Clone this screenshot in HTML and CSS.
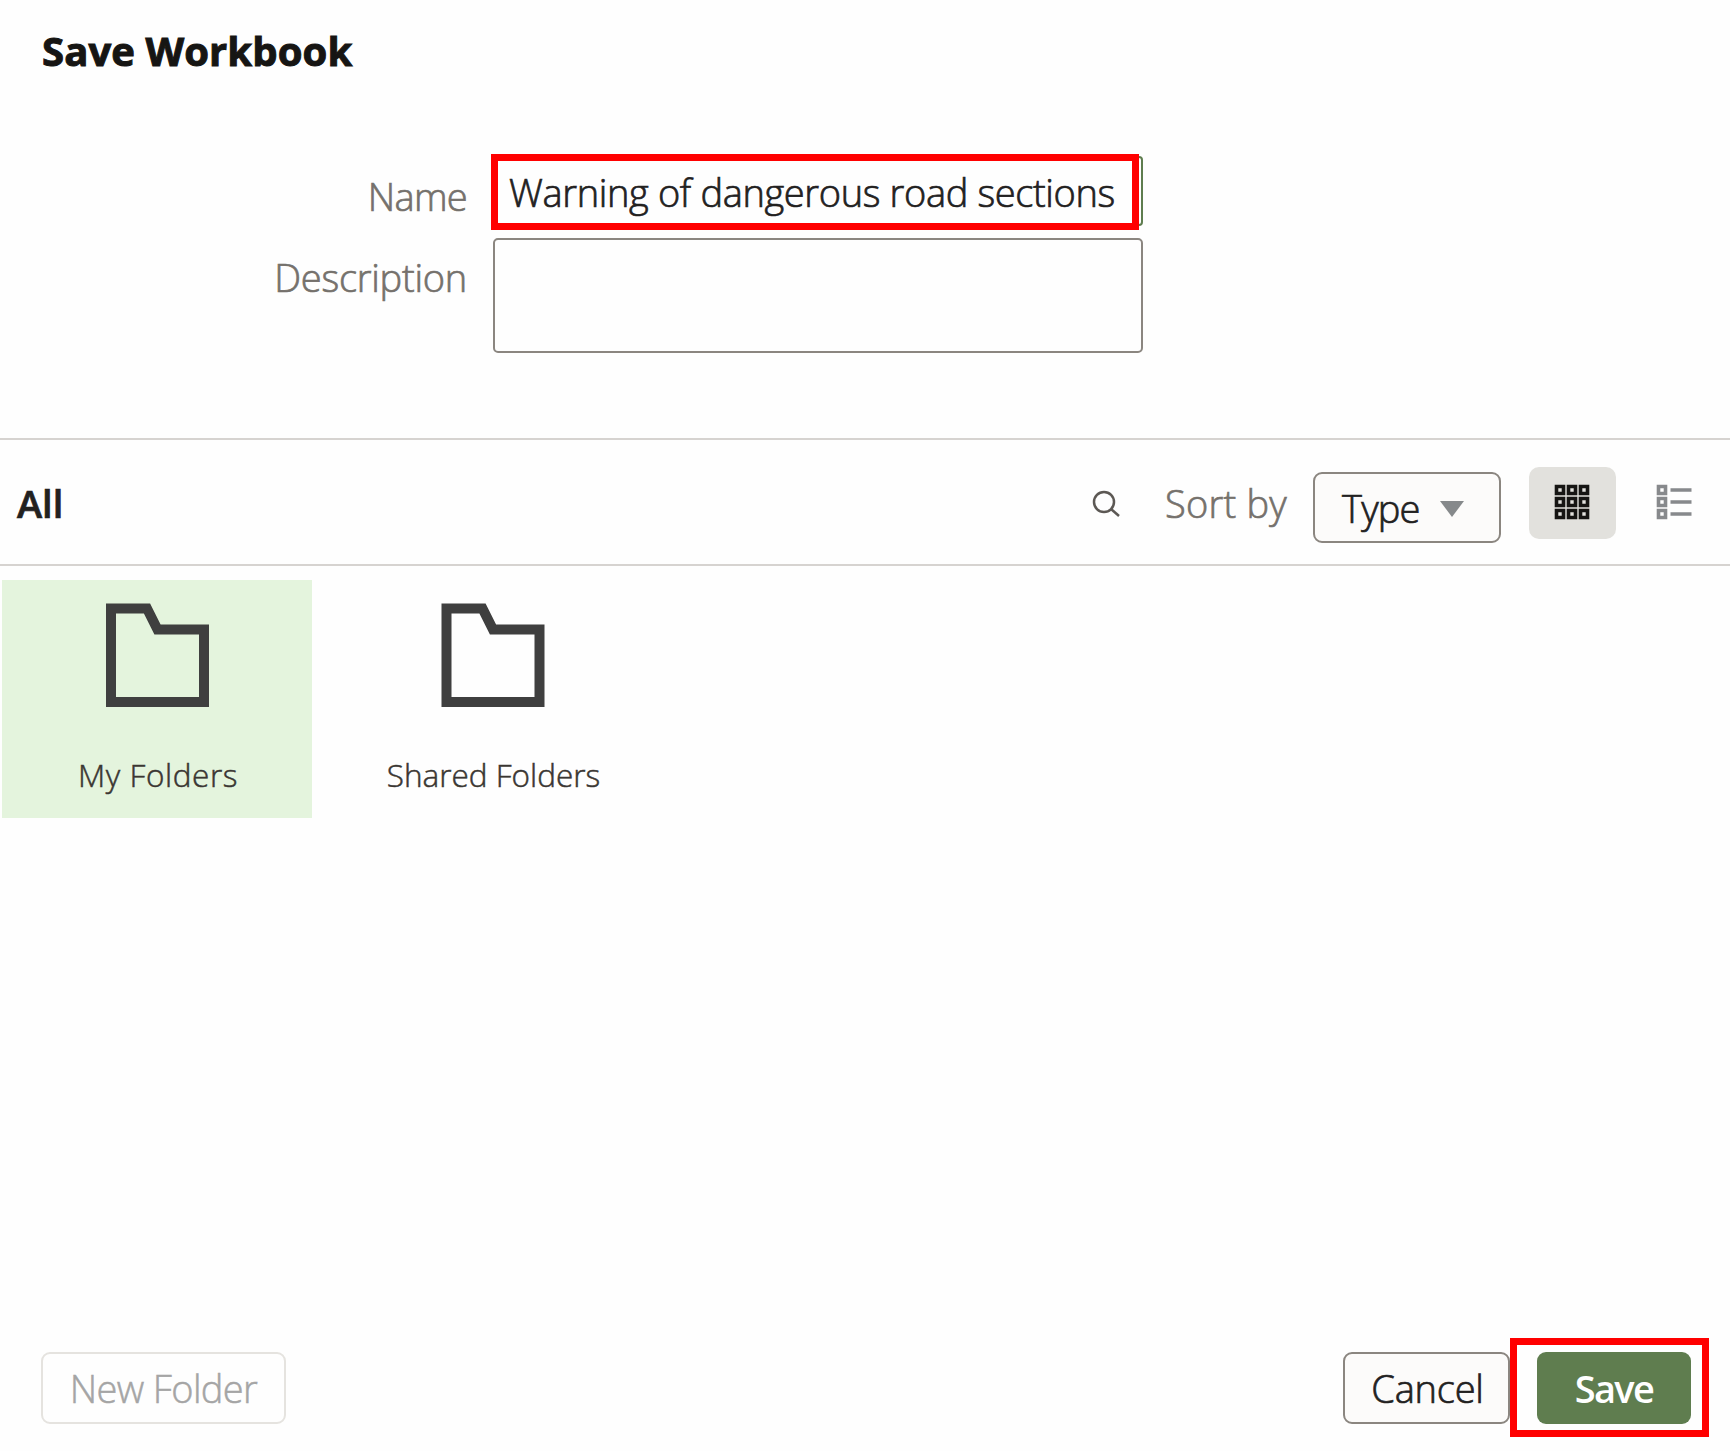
FILE: index.html
```html
<!DOCTYPE html>
<html lang="en">
<head>
<meta charset="utf-8">
<title>Save Workbook</title>
<link rel="stylesheet" href="styles.css">
</head>
<body>
<main class="dialog">
  <header class="header"><h1 class="title">Save Workbook</h1></header>
  <section class="form">
    <span class="label name-label">Name</span>
    <div class="name-field">Warning of dangerous road sections</div>
    <span class="label desc-label">Description</span>
    <div class="desc-field"></div>
  </section>
  <section class="toolbar">
    <h2 class="crumb">All</h2>
    <svg class="search" viewBox="0 0 28 28"><circle cx="12" cy="12" r="10"/><path d="M19 19l8 7"/></svg>
    <span class="sort">Sort by</span>
    <button class="type"><span class="type-value">Type</span><svg class="arrow" viewBox="0 0 24 16"><path d="M0 0h24L12 16z"/></svg></button>
    <button class="grid-view" aria-label="Grid view"><svg class="view-icon" viewBox="0 0 36 36"><path d="M2.500 2.500h7v7h-7zM14.500 2.500h7v7h-7zM26.500 2.500h7v7h-7zM2.500 14.500h7v7h-7zM14.500 14.500h7v7h-7zM26.500 14.500h7v7h-7zM2.500 26.500h7v7h-7zM14.500 26.500h7v7h-7zM26.500 26.500h7v7h-7z"/></svg></button>
    <button class="list-view" aria-label="List view"><svg class="view-icon" viewBox="0 0 36 36"><path d="M2.500 2.500h7v7h-7zM2.500 14.500h7v7h-7zM2.500 26.500h7v7h-7zM14.500 6h21M14.500 18h21M14.500 30h21"/></svg></button>
  </section>
  <section class="tiles">
    <div class="tile selected">
      <svg class="folder" viewBox="0 0 104 104"><path d="M6 5.500h36l10.500 21h46.500v72.500H6z"/></svg>
      <span class="tile-name mine">My Folders</span>
    </div>
    <div class="tile">
      <svg class="folder" viewBox="0 0 104 104"><path d="M5.500 5.500h36l10.500 21h46.500v72.500H5.500z"/></svg>
      <span class="tile-name">Shared Folders</span>
    </div>
  </section>
  <footer class="footer">
    <button class="new-folder">New Folder</button>
    <button class="cancel">Cancel</button>
    <div class="highlight"><button class="save">Save</button></div>
  </footer>
</main>
</body>
</html>
```
FILE: styles.css
```css
*, *::after { box-sizing: border-box; }
body { margin: 0; background: #fefefe; font-family: "Open Sans", "Noto Sans", sans-serif; font-size: 38px; font-weight: 300; line-height: 52px; color: #22211f; white-space: nowrap; -webkit-text-stroke: .7px; }
button { font: inherit; color: inherit; letter-spacing: inherit; padding: 0; margin: 0; border: 0; background: none; }
.dialog { width: 1730px; height: 1451px; display: flex; flex-direction: column; overflow: hidden; }
.header { height: 154px; padding: 25px 0 0 42px; }
.title { margin: 0; color: #161513; font-size: 40px; line-height: 52px; font-weight: 700; letter-spacing: .1px; -webkit-text-stroke: 1px #161513; }
.form { height: 284px; display: grid; grid-template-columns: 467px 652px; column-gap: 24px; grid-template-rows: 76px 115px; row-gap: 8px; }
.label { text-align: right; color: #75716c; -webkit-text-stroke-color: #75716c; }
.name-label { padding-top: 16px; letter-spacing: -.7px; }
.desc-label { padding-top: 13px; letter-spacing: -.25px; }
.name-field { width: 648px; border: 7px solid #f00; padding: 5px 0 0 11px; position: relative; letter-spacing: -.37px; }
.name-field::after { content: ""; position: absolute; left: 641px; top: -5px; width: 4px; height: 70px; border: 2px solid #5f7d4f; border-left: 0; border-radius: 0 5px 5px 0; }
.desc-field { margin-left: 2px; border: 2px solid #8b8680; border-radius: 5px; }
.toolbar { flex: none; height: 128px; border-top: 2px solid #d6d3d0; border-bottom: 2px solid #d6d3d0; display: flex; align-items: flex-start; }
.crumb { margin: 0; padding: 37px 0 0 17px; width: 1092px; font-size: 38px; font-weight: 600; line-height: 52px; }
.search { width: 28px; height: 28px; margin-top: 50px; fill: none; stroke: #5c5854; stroke-width: 2.500; }
.sort { margin: 37px 0 0 45px; width: 148px; color: #75716c; -webkit-text-stroke-color: #75716c; letter-spacing: .2px; }
.type { width: 188px; height: 71px; margin-top: 32px; border: 2px solid #8b8680; border-radius: 9px; background: #fcfbfa; display: flex; align-items: center; padding-left: 27px; letter-spacing: -.8px; }
.type-value { width: 98px; text-align: left; }
.arrow { width: 24px; height: 16px; margin-top: 3px; fill: #86898b; }
.grid-view { width: 87px; height: 72px; margin: 27px 0 0 28px; border-radius: 10px; background: #e2e1dd; padding: 17px 25px; display: flex; color: #161513; }
.list-view { margin: 44px 0 0 40px; display: flex; color: #87898c; }
.view-icon { width: 36px; height: 36px; fill: none; stroke: currentColor; stroke-width: 3.600; }
.tiles { height: 772px; padding: 14px 0 0 2px; display: flex; gap: 26px; }
.tile { width: 310px; height: 238px; display: flex; flex-direction: column; align-items: center; padding-top: 23px; color: #3a3632; font-size: 31.500px; }
.selected { background: #e4f4dd; }
.folder { width: 104px; height: 104px; fill: none; stroke: #3f3f3f; stroke-width: 10; }
.tile-name { margin-top: 42px; padding-left: 1px; -webkit-text-stroke: .5px #3a3632; }
.mine { padding-left: 2px; letter-spacing: .6px; }
.footer { height: 99px; padding-left: 41px; display: flex; }
.footer button { height: 72px; border: 2px solid #8b8680; border-radius: 9px; }
.footer .new-folder { width: 245px; margin-top: 14px; border-color: #e5e3df; color: #a5a5a5; -webkit-text-stroke: .5px #a5a5a5; letter-spacing: -.65px; }
.footer .cancel { width: 167px; margin: 14px 0 0 1057px; padding-left: 2px; background: #fcfbfa; letter-spacing: -.2px; }
.highlight { width: 199px; height: 99px; border: 7px solid #f00; padding: 7px 0 0 20px; }
.footer .save { width: 154px; border: 0; background: #5f7d4f; color: #fff; font-weight: 600; letter-spacing: -1.600px; -webkit-text-stroke-width: 0; }
```
